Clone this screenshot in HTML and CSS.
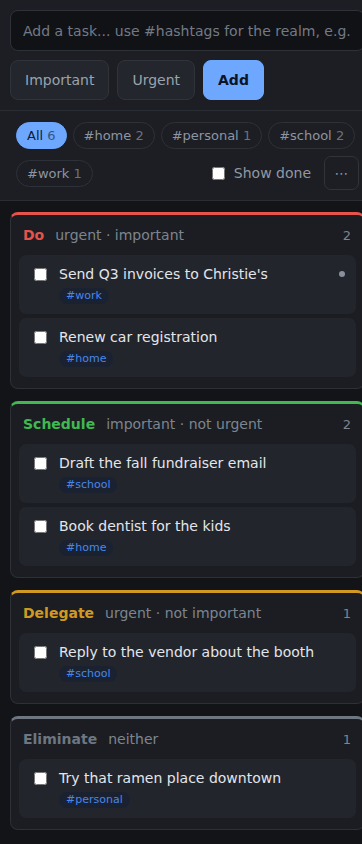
FILE: index.html
```html
<!DOCTYPE html>
<html lang="en">
<head>
<meta charset="utf-8">
<title>Eisenhower tasks</title>
<link rel="stylesheet" href="styles.css">
</head>
<body>
<div class="app">
  <header class="top">
    <form class="add-form">
      <input class="task-input" type="text" placeholder="Add a task... use #hashtags for the realm, e.g. #work">
      <div class="add-actions">
        <button type="button" class="btn">Important</button>
        <button type="button" class="btn">Urgent</button>
        <button type="button" class="btn btn-primary">Add</button>
      </div>
    </form>
    <div class="filters">
      <button type="button" class="chip chip-active">All <span class="chip-count">6</span></button>
      <button type="button" class="chip">#home <span class="chip-count">2</span></button>
      <button type="button" class="chip">#personal <span class="chip-count">1</span></button>
      <button type="button" class="chip">#school <span class="chip-count">2</span></button>
      <button type="button" class="chip">#work <span class="chip-count">1</span></button>
      <div class="filter-tools">
        <label class="show-done"><input type="checkbox" class="check">Show done</label>
        <button type="button" class="more">&#8943;</button>
      </div>
    </div>
  </header>

  <main class="quadrants">
    <section class="quad quad-do">
      <div class="quad-head"><span class="quad-title">Do</span><span class="quad-sub">urgent · important</span><span class="quad-count">2</span></div>
      <ul class="tasks">
        <li class="task"><input type="checkbox" class="check task-check"><div class="task-body"><div class="task-title">Send Q3 invoices to Christie's</div><span class="tag">#work</span></div><span class="task-dot"></span></li>
        <li class="task"><input type="checkbox" class="check task-check"><div class="task-body"><div class="task-title">Renew car registration</div><span class="tag">#home</span></div></li>
      </ul>
    </section>

    <section class="quad quad-schedule">
      <div class="quad-head"><span class="quad-title">Schedule</span><span class="quad-sub">important · not urgent</span><span class="quad-count">2</span></div>
      <ul class="tasks">
        <li class="task"><input type="checkbox" class="check task-check"><div class="task-body"><div class="task-title">Draft the fall fundraiser email</div><span class="tag">#school</span></div></li>
        <li class="task"><input type="checkbox" class="check task-check"><div class="task-body"><div class="task-title">Book dentist for the kids</div><span class="tag">#home</span></div></li>
      </ul>
    </section>

    <section class="quad quad-delegate">
      <div class="quad-head"><span class="quad-title">Delegate</span><span class="quad-sub">urgent · not important</span><span class="quad-count">1</span></div>
      <ul class="tasks">
        <li class="task"><input type="checkbox" class="check task-check"><div class="task-body"><div class="task-title">Reply to the vendor about the booth</div><span class="tag">#school</span></div></li>
      </ul>
    </section>

    <section class="quad quad-eliminate">
      <div class="quad-head"><span class="quad-title">Eliminate</span><span class="quad-sub">neither</span><span class="quad-count">1</span></div>
      <ul class="tasks">
        <li class="task"><input type="checkbox" class="check task-check"><div class="task-body"><div class="task-title">Try that ramen place downtown</div><span class="tag">#personal</span></div></li>
      </ul>
    </section>
  </main>
</div>
</body>
</html>
```

FILE: styles.css
```css
* { box-sizing: border-box; }

html, body {
  margin: 0;
  padding: 0;
  background: #131418;
}

body {
  font-family: "DejaVu Sans", Verdana, sans-serif;
  font-size: 14px;
  color: #e3e6eb;
}

.app {
  width: 375px;
  min-height: 844px;
  background: #131418;
}

.top {
  background: #1c1e24;
  border-bottom: 1px solid #2a2d34;
}

.add-form {
  display: flex;
  flex-direction: column;
  gap: 9px;
  padding: 10px 10px 10px;
  margin: 0;
  border-bottom: 1px solid #2a2d34;
}

.task-input {
  display: block;
  width: 100%;
  height: 41px;
  padding: 0 12px;
  font-family: inherit;
  font-size: 14px;
  color: #e3e6eb;
  background: #111216;
  border: 1px solid #2e3138;
  border-radius: 8px;
  outline: none;
}

.task-input::placeholder {
  color: #737a86;
}

.add-actions {
  display: flex;
  gap: 8px;
}

.btn {
  height: 40px;
  padding: 0 14px;
  font-family: inherit;
  font-size: 14px;
  color: #9aa3b0;
  background: #23262c;
  border: 1px solid #30333a;
  border-radius: 8px;
}

.btn-primary {
  background: #6ea8fe;
  border-color: #6ea8fe;
  color: #0c1424;
  font-weight: bold;
}

.filters {
  display: flex;
  flex-wrap: wrap;
  align-items: center;
  gap: 7px 6px;
  padding: 11px 16px 10px;
}

.chip {
  height: 27px;
  padding: 0 10px;
  font-family: inherit;
  font-size: 13px;
  line-height: 15px;
  color: #8d95a2;
  background: transparent;
  border: 1px solid #2e3138;
  border-radius: 14px;
}

.chip-count {
  opacity: 0.7;
}

.chip-active {
  background: #6ea8fe;
  border-color: #6ea8fe;
  color: #0f1b30;
}

.chip-active .chip-count {
  opacity: 0.6;
}

.filter-tools {
  margin-left: auto;
  display: flex;
  align-items: center;
  gap: 13px;
}

.show-done {
  display: flex;
  align-items: center;
  gap: 9px;
  color: #9198a3;
  font-size: 14px;
}

.check {
  width: 13px;
  height: 13px;
  margin: 0;
  flex: none;
}

.more {
  width: 35px;
  height: 34px;
  padding: 0;
  font-family: inherit;
  font-size: 14px;
  color: #8d95a2;
  background: transparent;
  border: 1px solid #30333a;
  border-radius: 7px;
}

.quadrants {
  display: flex;
  flex-direction: column;
  gap: 12px;
  padding: 11px 10px 12px;
}

.quad {
  background: #1b1d22;
  border: 1px solid #2d3037;
  border-top-width: 3px;
  border-radius: 8px;
  padding: 8px 8px 11px;
}

.quad-do { border-top-color: #e5534b; }
.quad-schedule { border-top-color: #3fb950; }
.quad-delegate { border-top-color: #d29922; }
.quad-eliminate { border-top-color: #6e7681; }

.quad-head {
  display: flex;
  align-items: center;
  height: 24px;
  padding: 0 5px 0 4px;
  margin-bottom: 8px;
}

.quad-title {
  font-weight: bold;
  font-size: 14px;
}

.quad-do .quad-title { color: #e5534b; }
.quad-schedule .quad-title { color: #3fb950; }
.quad-delegate .quad-title { color: #d29922; }
.quad-eliminate .quad-title { color: #6e7681; }

.quad-sub {
  margin-left: 11px;
  color: #7d8590;
  font-size: 14px;
}

.quad-count {
  margin-left: auto;
  color: #7d8590;
  font-size: 13px;
}

.tasks {
  list-style: none;
  margin: 0;
  padding: 0;
  display: flex;
  flex-direction: column;
  gap: 4px;
}

.task {
  display: flex;
  align-items: flex-start;
  gap: 12px;
  min-height: 59px;
  padding: 9px 11px 10px 15px;
  background: #22252c;
  border-radius: 7px;
}

.task-check {
  margin-top: 4px;
}

.task-body {
  flex: 1;
  display: flex;
  flex-direction: column;
  align-items: flex-start;
  gap: 4px;
}

.task-title {
  line-height: 20px;
  color: #e3e6eb;
}

.tag {
  display: inline-block;
  height: 16px;
  line-height: 16px;
  padding: 0 7px;
  font-size: 11px;
  color: #4a86e8;
  background: #1a2232;
  border-radius: 8px;
}

.task-dot {
  width: 6px;
  height: 6px;
  margin-top: 7px;
  border-radius: 50%;
  background: #8a8f9c;
  flex: none;
}
```
